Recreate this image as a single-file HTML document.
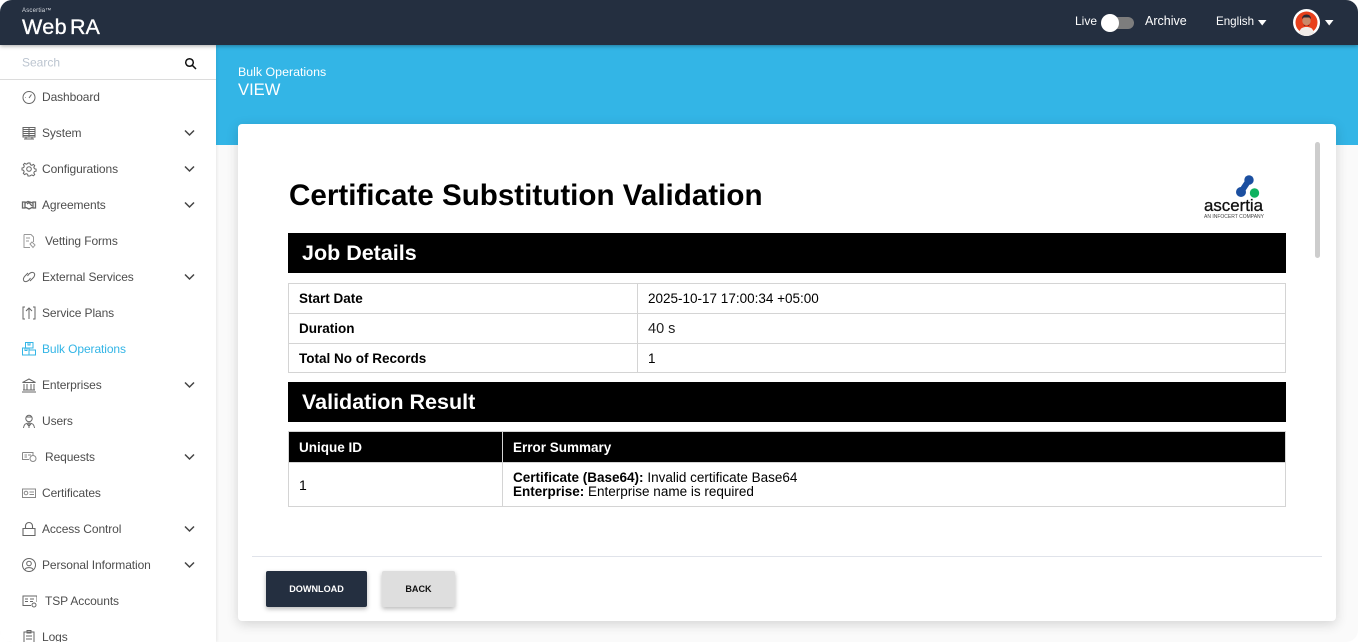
<!DOCTYPE html>
<html><head><meta charset="utf-8"><style>
*{box-sizing:border-box}
html,body{margin:0;padding:0;width:1358px;height:642px;overflow:hidden;background:#fff;font-family:"Liberation Sans",sans-serif}
#root{position:absolute;left:0;top:0;width:1358px;height:642px;overflow:hidden;border-radius:12px;background:#fafafa}
.a{position:absolute;white-space:nowrap}
#top{left:0;top:0;width:1358px;height:45px;background:#242f40;box-shadow:0 1px 4px rgba(0,0,0,.35);z-index:5}
#side{left:0;top:45px;width:216px;height:597px;background:#fff;overflow:hidden;z-index:3;box-shadow:1px 0 3px rgba(0,0,0,.08)}
#blue{left:216px;top:45px;width:1142px;height:100px;background:#33b5e6}
.it{position:absolute;left:0;width:216px;height:36px;font-size:12px;line-height:36px;color:#4d4d4d;white-space:nowrap;letter-spacing:-.1px}
.it span{position:absolute;left:42px;top:0}
.it span.s{left:45px}
.it svg.i{position:absolute;left:21px;top:10px;width:16px;height:16px;fill:none;stroke:#666;stroke-width:1}
.it svg.c{position:absolute;left:184px;top:14px;width:11px;height:8px;fill:none;stroke:#444;stroke-width:1.5}
.act{color:#33b5e6}
.act svg.i{stroke:#33b5e6}
#card{left:238px;top:124px;width:1098px;height:497px;background:#fff;border-radius:4px;box-shadow:0 3px 12px rgba(0,0,0,.16)}
.bar{left:288px;width:998px;height:40px;background:#000;color:#fff;font-weight:bold;font-size:21.5px;line-height:40px;padding-left:14px}
table{position:absolute;border-collapse:collapse;table-layout:fixed;font-size:13.5px;color:#000;left:288px;width:998px}
td,th{border:1px solid #d4d4d4;padding:0 10px;text-align:left;overflow:hidden;white-space:nowrap}
.btn{height:36px;top:571px;border-radius:2px;font-size:9.1px;font-weight:bold;line-height:37px;text-align:center;box-shadow:0 2px 5px rgba(0,0,0,.28)}
</style></head><body><div id="root">
<div class="a" id="blue"></div>
<div class="a" id="top">
 <div class="a" style="left:22px;top:8px;font-size:6px;color:#d8dce2;letter-spacing:.2px">Ascertia™</div>
 <div class="a" style="left:22px;top:15px;font-size:21.5px;line-height:24px;color:#fff;letter-spacing:.4px;-webkit-text-stroke:.35px #fff">Web<span style="margin-left:3px;letter-spacing:0">RA</span></div>
 <div class="a" style="left:1075px;top:14px;font-size:12px;line-height:15px;color:#fff">Live</div>
 <div class="a" style="left:1103px;top:17px;width:31px;height:12px;border-radius:6px;background:#7d7d7d"></div>
 <div class="a" style="left:1101px;top:14px;width:18px;height:18px;border-radius:50%;background:#fff"></div>
 <div class="a" style="left:1145px;top:14px;font-size:12.5px;line-height:15px;color:#fff">Archive</div>
 <div class="a" style="left:1216px;top:14px;font-size:11.6px;line-height:15px;color:#fff">English</div>
 <svg class="a" style="left:1258px;top:20px" width="9" height="6"><path d="M0 0H8.500L4.200 5.500Z" fill="#fff"/></svg>
 <svg class="a" style="left:1293px;top:9px" width="27" height="27" viewBox="0 0 27 27"><circle cx="13.500" cy="13.500" r="13.500" fill="#fff"/><circle cx="13.500" cy="13.500" r="11" fill="#e8401c"/><path d="M6 24c1-5 4-6 7.500-6s6.500 1 7.500 6a11 11 0 0 1-15 0Z" fill="#f1ece8"/><circle cx="13.500" cy="12" r="4.200" fill="#c98a6a"/><path d="M9 10c0-3 2-4.500 4.500-4.500S18 7 18 10l-1.500-1.500h-6Z" fill="#2a2a35"/><path d="M10 14c1 4 6 4 7 0l-1 3h-5Z" fill="#3a2a28"/></svg>
 <svg class="a" style="left:1325px;top:20px" width="9" height="6"><path d="M0 0H8.500L4.200 5.500Z" fill="#fff"/></svg>
</div>
<div class="a" id="side">
 <div class="a" style="left:0;top:0;width:216px;height:35px;border-bottom:1px solid #dcdcdc"></div>
 <div class="a" style="left:22px;top:10px;font-size:12px;line-height:15px;color:#bcc5d0;transform:translateY(0.5px)">Search</div>
 <svg class="a" style="left:184px;top:12px" width="13" height="13" viewBox="0 0 13 13" fill="none" stroke="#111" stroke-width="1.500"><circle cx="5.500" cy="5.500" r="3.800"/><path d="M8.300 8.300L12 12"/></svg>

 <div class="it" style="top:34px"><svg class="i" viewBox="0 0 16 16"><circle cx="8" cy="8.500" r="6"/><path d="M8 9l2.500-3.500M4.500 8.500H5"/></svg><span>Dashboard</span></div>
 <div class="it" style="top:70px"><svg class="i" viewBox="0 0 16 16"><path d="M2 2.500H14V12H2ZM2 4.500H14M2 6.500H14M2 8.500H14M2 10.500H14M8 2.500V12M5 12V14M11 12V14M3 14H13"/></svg><span>System</span><svg class="c" viewBox="0 0 11 8"><path d="M1 1.500L5.500 6L10 1.500"/></svg></div>
 <div class="it" style="top:106px"><svg class="i" viewBox="0 0 16 16"><circle cx="8" cy="8" r="2.300"/><path d="M7 2h2l.4 1.700 1.500.6 1.500-.9 1.300 1.300-.9 1.500.6 1.500 1.700.4v2l-1.700.4-.6 1.500.9 1.500-1.300 1.300-1.500-.9-1.500.6L9 15H7l-.4-1.700-1.500-.6-1.500.9-1.300-1.300.9-1.500-.6-1.500L1 9V7l1.700-.4.6-1.500-.9-1.500 1.300-1.300 1.500.9 1.500-.6Z"/></svg><span>Configurations</span><svg class="c" viewBox="0 0 11 8"><path d="M1 1.500L5.500 6L10 1.500"/></svg></div>
 <div class="it" style="top:142px"><svg class="i" style="stroke-width:1.300" viewBox="0 0 16 16"><path d="M1.500 5H4V11H1.500ZM12 5H14.500V11H12ZM4 6L7 4.500 12 6M4 10L8 12 12 10M6 7L8 5.500 11 9"/></svg><span>Agreements</span><svg class="c" viewBox="0 0 11 8"><path d="M1 1.500L5.500 6L10 1.500"/></svg></div>
 <div class="it" style="top:178px"><svg class="i" style="stroke:#999" viewBox="0 0 16 16"><path d="M3 1.500H10L12.500 4V9M3 1.500V14.500H9M5 5H9M5 8H8M9 11l2-2 3 3-2 2.500Z"/></svg><span class="s">Vetting Forms</span></div>
 <div class="it" style="top:214px"><svg class="i" viewBox="0 0 16 16"><path d="M7 4L4 7C2 9 2 11 3 12S6 13 8 11L9.500 9M9 12L12 9C14 7 14 5 13 4S10 3 8 5L6.500 7"/></svg><span>External Services</span><svg class="c" viewBox="0 0 11 8"><path d="M1 1.500L5.500 6L10 1.500"/></svg></div>
 <div class="it" style="top:250px"><svg class="i" viewBox="0 0 16 16"><path d="M4 2H2V14H4M12 2H14V14H12M8 14V3M5 6L8 3 11 6"/></svg><span>Service Plans</span></div>
 <div class="it act" style="top:286px"><svg class="i" viewBox="0 0 16 16"><path d="M4.500 1.500H12V7H4.500ZM7 1.500V4H9V1.500M1.500 7H8V14H1.500ZM8 9H14.500V14H8ZM4 7V9.500H6V7"/></svg><span>Bulk Operations</span></div>
 <div class="it" style="top:322px"><svg class="i" viewBox="0 0 16 16"><path d="M1.500 5.500L8 2 14.500 5.500ZM3 7V12.500M6 7V12.500M10 7V12.500M13 7V12.500M2 13H14M1 15H15"/></svg><span>Enterprises</span><svg class="c" viewBox="0 0 11 8"><path d="M1 1.500L5.500 6L10 1.500"/></svg></div>
 <div class="it" style="top:358px"><svg class="i" viewBox="0 0 16 16"><circle cx="8" cy="5.500" r="3.200"/><path d="M5 4H11M2.500 15C3 11 5 10 8 10S13 11 13.500 15M8 10V15M6 11L8 13 10 11"/></svg><span>Users</span></div>
 <div class="it" style="top:394px"><svg class="i" style="stroke:#888" viewBox="0 0 16 16"><path d="M1.500 3.500H12V6M1.500 3.500V10.500H8M3.500 6H6M7 6H10M3.500 8H6"/><circle cx="12" cy="9.500" r="3"/></svg><span class="s">Requests</span><svg class="c" viewBox="0 0 11 8"><path d="M1 1.500L5.500 6L10 1.500"/></svg></div>
 <div class="it" style="top:430px"><svg class="i" style="stroke:#888" viewBox="0 0 16 16"><path d="M1.500 4H14.500V12.500H1.500ZM8.500 7H13M8.500 9.500H13"/><circle cx="5" cy="8" r="1.800"/></svg><span>Certificates</span></div>
 <div class="it" style="top:466px"><svg class="i" style="stroke-width:1.100" viewBox="0 0 16 16"><path d="M2 7.500H14V14.500H2ZM4.500 7.500V5A3.500 3.500 0 0 1 11.500 5V7.500"/></svg><span>Access Control</span><svg class="c" viewBox="0 0 11 8"><path d="M1 1.500L5.500 6L10 1.500"/></svg></div>
 <div class="it" style="top:502px"><svg class="i" viewBox="0 0 16 16"><circle cx="8" cy="8" r="6.500"/><circle cx="8" cy="6.500" r="2.300"/><path d="M4 12.500C5 10 11 10 12 12.500"/></svg><span>Personal Information</span><svg class="c" viewBox="0 0 11 8"><path d="M1 1.500L5.500 6L10 1.500"/></svg></div>
 <div class="it" style="top:538px"><svg class="i" viewBox="0 0 16 16"><path d="M10 12.500H2V3H16V9M4 6H7M4 8.500H7M9 6H13M9 8.500H12"/><circle cx="13" cy="12" r="2"/></svg><span class="s">TSP Accounts</span></div>
 <div class="it" style="top:574px"><svg class="i" viewBox="0 0 16 16"><path d="M3 3H13V15H3ZM6 1.500H10V4H6ZM5 7H11M5 10H11"/></svg><span>Logs</span></div>
</div>
<div class="a" style="left:238px;top:65px;font-size:12.4px;line-height:15px;color:#fff">Bulk Operations</div>
<div class="a" style="left:238px;top:80px;font-size:16.6px;line-height:20px;color:#fff">VIEW</div>
<div class="a" id="card"></div>
<div class="a" style="left:1315px;top:142px;width:5px;height:116px;border-radius:3px;background:#cdcdcd"></div>
<div class="a" style="left:289px;top:179px;font-size:29.6px;line-height:34px;font-weight:bold;color:#000">Certificate Substitution Validation</div>
<svg class="a" style="left:1200px;top:172px" width="70" height="50" viewBox="0 0 70 50"><path d="M49 8L41 20" stroke="#1b4fa0" stroke-width="6" stroke-linecap="round"/><circle cx="49" cy="8" r="4.700" fill="#1b4fa0"/><circle cx="41" cy="20" r="5" fill="#1b4fa0"/><circle cx="54.500" cy="21" r="4.700" fill="#0fb25f"/><text x="4" y="39" font-family="Liberation Sans" font-size="17" fill="#111" stroke="#111" stroke-width=".3" textLength="59" lengthAdjust="spacingAndGlyphs">ascertia</text><text x="4" y="46" font-family="Liberation Sans" font-size="5" fill="#444" textLength="60" lengthAdjust="spacingAndGlyphs">AN INFOCERT COMPANY</text></svg>
<div class="a bar" style="top:233px">Job Details</div>
<table style="top:283px;height:89px"><colgroup><col style="width:349px"><col></colgroup>
<tr style="height:30px"><td><b>Start Date</b></td><td>2025-10-17 17:00:34 +05:00</td></tr>
<tr style="height:30px"><td><b>Duration</b></td><td style="font-size:14.5px;color:#222">40 s</td></tr>
<tr style="height:29px"><td><b>Total No of Records</b></td><td>1</td></tr></table>
<div class="a bar" style="top:382px">Validation Result</div>
<table style="top:431px;height:75px"><colgroup><col style="width:214px"><col></colgroup>
<tr style="height:31px;background:#000;color:#fff"><th>Unique ID</th><th>Error Summary</th></tr>
<tr style="height:44px;line-height:14px"><td style="font-size:14px">1</td><td><b>Certificate (Base64):</b> Invalid certificate Base64<br><b>Enterprise:</b> Enterprise name is required</td></tr></table>
<div class="a" style="left:252px;top:556px;width:1070px;height:1px;background:#e0e3ea"></div>
<div class="a btn" style="left:266px;width:101px;background:#242f40;color:#fff">DOWNLOAD</div>
<div class="a btn" style="left:382px;width:73px;background:#dedede;color:#111">BACK</div>
</div></body></html>
